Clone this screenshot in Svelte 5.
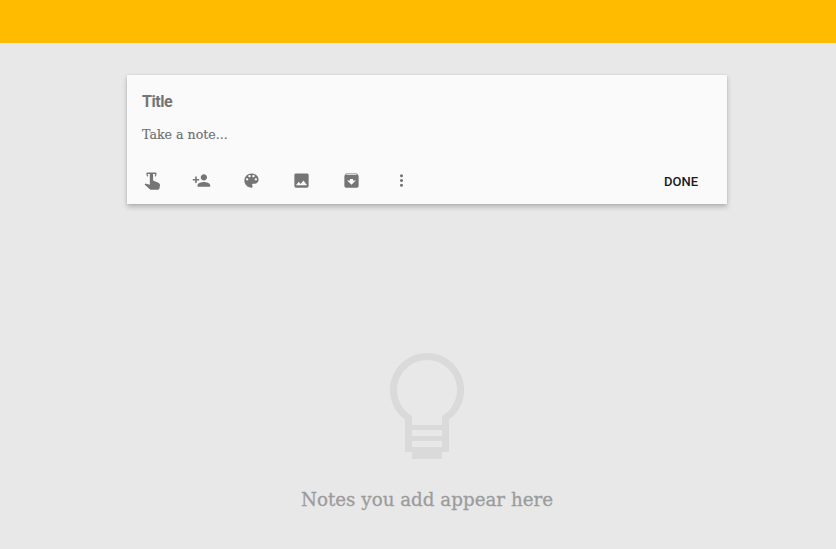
<script>
  // material icon paths for the note toolbar, first one is hand drawn
  const icons = [
    { name: 'touch', d: 'M7.2 1.8h9.6c1 0 1.6.7 1.6 1.6 0 1.5-.6 2.8-1.6 3.8l-.9-1c.6-.7.9-1.4 1-2.4H7c.1 1 .4 1.7 1 2.4l-.9 1c-1-1-1.6-2.3-1.6-3.8 0-.9.6-1.6 1.6-1.6zM9.9 3.6h4.1V12l6 2.5c1.9.8 2.9 2 2.8 3.6l-.8 4.1c-.2.9-.9 1.4-1.8 1.4H10.6L3.2 17l1.2-1.2 5.5 1.5z' },
    { name: 'collaborator', d: 'M15 12c2.21 0 4-1.79 4-4s-1.79-4-4-4-4 1.79-4 4 1.79 4 4 4zm-9-2V7H4v3H1v2h3v3h2v-3h3v-2H6zm9 4c-2.67 0-8 1.34-8 4v2h16v-2c0-2.66-5.33-4-8-4z' },
    { name: 'colour', d: 'M12 3c-4.97 0-9 4.03-9 9s4.03 9 9 9c.83 0 1.5-.67 1.5-1.5 0-.39-.15-.74-.39-1.01-.23-.26-.38-.61-.38-.99 0-.83.67-1.5 1.5-1.5H16c2.76 0 5-2.24 5-5 0-4.42-4.03-8-9-8zm-5.5 9c-.83 0-1.5-.67-1.5-1.5S5.67 9 6.5 9 8 9.67 8 10.5 7.33 12 6.5 12zm3-4C8.67 8 8 7.33 8 6.5S8.67 5 9.5 5s1.5.67 1.5 1.5S10.33 8 9.5 8zm5 0c-.83 0-1.5-.67-1.5-1.5S13.67 5 14.5 5s1.5.67 1.5 1.5S15.33 8 14.5 8zm3 4c-.83 0-1.5-.67-1.5-1.5S16.67 9 17.5 9s1.5.67 1.5 1.5-.67 1.5-1.5 1.5z' },
    { name: 'image', d: 'M21 19V5c0-1.1-.9-2-2-2H5c-1.1 0-2 .9-2 2v14c0 1.1.9 2 2 2h14c1.1 0 2-.9 2-2zM8.5 13.5l2.5 3.01L14.5 12l4.5 6H5l3.5-4.5z' },
    { name: 'archive', d: 'M20.54 5.23l-1.39-1.68C18.88 3.21 18.47 3 18 3H6c-.47 0-.88.21-1.16.55L3.46 5.23C3.17 5.57 3 6.02 3 6.5V19c0 1.1.9 2 2 2h14c1.1 0 2-.9 2-2V6.5c0-.48-.17-.93-.46-1.27zM12 17.5L6.5 12H10v-2h4v2h3.5L12 17.5zM5.12 5l.81-1h12l.94 1H5.12z' },
    { name: 'more', d: 'M12 8c1.1 0 2-.9 2-2s-.9-2-2-2-2 .9-2 2 .9 2 2 2zm0 2c-1.1 0-2 .9-2 2s.9 2 2 2 2-.9 2-2-.9-2-2-2zm0 6c-1.1 0-2 .9-2 2s.9 2 2 2 2-.9 2-2-.9-2-2-2z' }
  ];
</script>

<header class="topbar"></header>

<main>
  <section class="note">
    <div class="title">Title</div>
    <div class="body">Take a note...</div>
    <div class="toolbar">
      {#each icons as icon}
        <span class="tool" title={icon.name}>
          <svg viewBox="0 0 24 24" width="19" height="19"><path d={icon.d} /></svg>
        </span>
      {/each}
      <span class="done">DONE</span>
    </div>
  </section>

  <section class="empty">
    <svg class="bulb" viewBox="0 0 74 106" width="74" height="106">
      <path
        fill-rule="evenodd"
        d="M37 0a37 37 0 0 1 22 66.8V99H52v7H22v-7H15V66.8A37 37 0 0 1 37 0zM37 7a30 30 0 0 0-15 56V72H52V63A30 30 0 0 0 37 7zM22 77v6H52V77zM22 88v6H52V88z"
      />
    </svg>
    <p>Notes you add appear here</p>
  </section>
</main>

<style>
  :global(body) {
    background: #e8e8e8;
  }

  .topbar {
    display: block;
    height: 43px;
    background: #ffbb00;
  }

  main {
    display: flex;
    flex-direction: column;
    align-items: center;
    padding: 32px 0 0 18px;
    font-family: Roboto, sans-serif;
  }

  .note {
    box-sizing: border-box;
    width: 600px;
    height: 129px;
    padding: 16px 0 0 15px;
    background: #fafafa;
    box-shadow: 0 3px 5px rgba(0, 0, 0, 0.22), 0 0 2px rgba(0, 0, 0, 0.1);
  }

  .title {
    height: 20px;
    line-height: 21px;
    font-size: 16px;
    font-weight: 700;
    letter-spacing: -0.45px;
    color: #757575;
  }

  .body {
    margin-top: 15px;
    height: 18px;
    line-height: 18px;
    font-family: "DejaVu Serif", serif;
    font-size: 12.6px;
    color: #6f6f6f;
    -webkit-text-stroke: 0.15px #6f6f6f;
  }

  .toolbar {
    display: flex;
    align-items: center;
    gap: 26px;
    margin: 24px 0 0 -3px;
    height: 24px;
  }

  .tool {
    display: flex;
    align-items: center;
    justify-content: center;
    width: 24px;
    height: 24px;
  }

  .tool path {
    fill: #757575;
  }

  .done {
    margin-left: auto;
    padding: 3px 29px 0 0;
    font-size: 13px;
    font-weight: 500;
    color: #1a1a1a;
  }

  .empty {
    display: flex;
    flex-direction: column;
    align-items: center;
    margin-top: 149px;
  }

  .bulb path {
    fill: #dadada;
  }

  .empty p {
    margin: 28px 0 0;
    line-height: 26px;
    font-family: "DejaVu Serif", serif;
    font-size: 18.3px;
    color: #9c9c9c;
    -webkit-text-stroke: 0.3px #9c9c9c;
  }
</style>
